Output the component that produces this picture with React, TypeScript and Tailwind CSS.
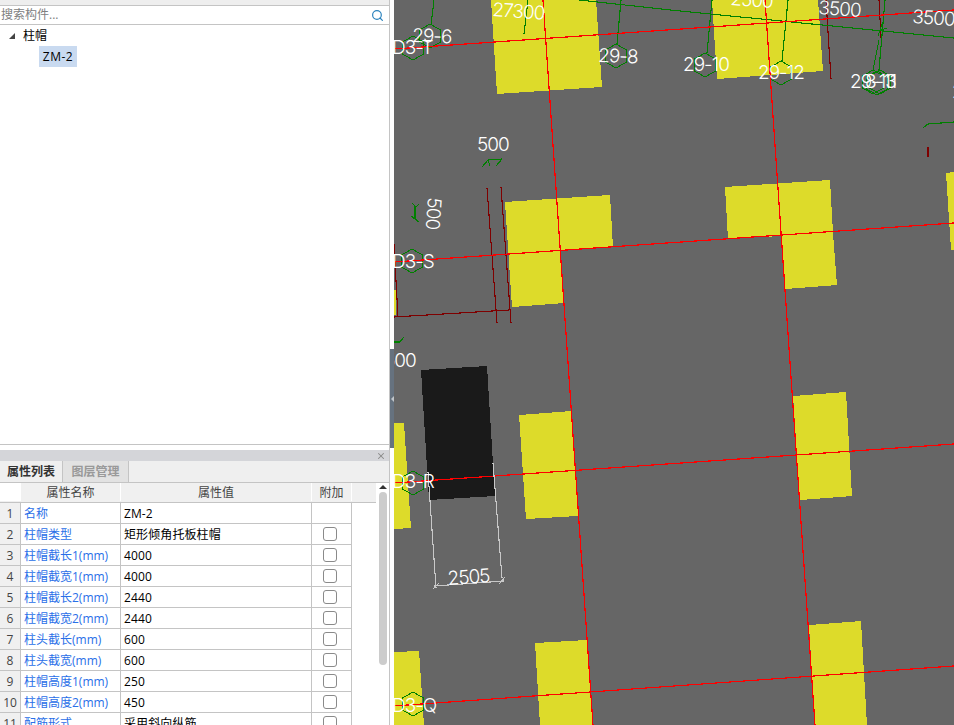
import { Search, X } from "lucide-react";

const rows = [
  ["名称", "ZM-2", false],
  ["柱帽类型", "矩形倾角托板柱帽", true],
  ["柱帽截长1(mm)", "4000", true],
  ["柱帽截宽1(mm)", "4000", true],
  ["柱帽截长2(mm)", "2440", true],
  ["柱帽截宽2(mm)", "2440", true],
  ["柱头截长(mm)", "600", true],
  ["柱头截宽(mm)", "600", true],
  ["柱帽高度1(mm)", "250", true],
  ["柱帽高度2(mm)", "450", true],
  ["配筋形式", "采用斜向纵筋", true],
] as const;

const yellowBlocks = [
  "491,0 596,0 602,87 497,94",
  "712,0 818,0 823,71 717,79",
  "505,202 610,195 613,247 561,251 564,303 512,307",
  "725,187 830,180 833,233 837,285 785,289 781,236 728,239",
  "946,173 954,172 954,250 951,250",
  "519,415 571,411 578,516 526,519",
  "793,396 846,392 852,496 800,500",
  "394,423 404,423 411,528 394,529",
  "394,652 419,651 424,725 394,725",
  "535,643 587,640 593,725 540,725",
  "809,625 861,621 867,725 815,725",
  "394,290 396,290 396,315 394,315",
];

const redLines = [
  [394, 49, 954, 10],
  [394, 262, 954, 223],
  [394, 483, 954, 444],
  [394, 706, 954, 666],
  [543, 0, 593, 725],
  [765, 0, 815, 725],
];

const darkRedLines = [
  [487, 188, 497, 323],
  [501, 187, 511, 323],
  [394, 317, 509, 310],
  [394, 244, 398, 317],
  [826, 0, 831, 79],
  [879, 0, 881, 38],
  [928, 147, 928, 157],
];

const greenLines = [
  "434,0 431,25",
  "528,0 524,34",
  "621,0 617,44",
  "712,0 707,53",
  "788,0 782,61",
  "885,0 879,70",
  "879,40 873,70",
  "579,0 680,11 954,38",
  "875,31 881,30 887,28",
  "882,24 878,36",
  "954,122 928,124 923,128",
  "482,167 488,160 502,159",
  "488,160 490,166",
  "496,166 502,159",
  "412,203 416,207 419,204",
  "415,206 415,219",
  "411,216 415,219 419,222",
  "394,342 400,342 404,337",
];

const hexagons = [
  [430, 36],
  [413, 48],
  [616, 56],
  [705, 65],
  [781, 73],
  [873, 82],
  [877, 83],
  [880, 82],
  [412, 261],
  [413, 483],
  [413, 704],
];

const labels = [
  ["27300", 492, 16, 4],
  ["29-6", 412, 42, 2],
  ["D3-T", 392, 54, 0],
  ["29-8", 598, 62, 2],
  ["29-10", 683, 71, 0],
  ["29-12", 758, 79, 0],
  ["29-13", 850, 88, 0],
  ["8-11", 865, 88, 0],
  ["2500", 730, 5, 4],
  ["3500", 818, 14, 4],
  ["3500", 912, 23, 4],
  ["2", 952, 98, 0],
  ["500", 477, 151, 0],
  ["D3-S", 392, 268, 0],
  ["500", 384, 367, 0],
  ["D3-R", 392, 488, 0],
  ["2505", 448, 585, -4],
  ["D3-Q", 392, 712, 0],
] as const;

function hexPoints(cx: number, cy: number, r = 12) {
  return [0, 60, 120, 180, 240, 300]
    .map((a) => {
      const t = ((a - 90) * Math.PI) / 180;
      return `${cx + r * Math.cos(t)},${cy + r * Math.sin(t)}`;
    })
    .join(" ");
}

function Drawing() {
  return (
    <svg viewBox="394 0 560 725" className="block h-full w-full" shapeRendering="crispEdges">
      {yellowBlocks.map((p) => (
        <polygon key={p} points={p} fill="#dddb2a" />
      ))}
      <polygon points="421,370 487,366 495,496 429,500" fill="#1a1a1a" />

      {darkRedLines.map(([a, b, c, d]) => (
        <line key={`${a}-${b}`} x1={a} y1={b} x2={c} y2={d} stroke="#7f0000" strokeWidth="1.1" />
      ))}
      {greenLines.map((p) => (
        <polyline key={p} points={p} fill="none" stroke="#008000" strokeWidth="1.1" />
      ))}
      {hexagons.map(([x, y]) => (
        <polygon key={`${x}-${y}`} points={hexPoints(x, y)} fill="none" stroke="#008000" strokeWidth="1" />
      ))}
      {redLines.map(([a, b, c, d]) => (
        <line key={`${a}-${b}`} x1={a} y1={b} x2={c} y2={d} stroke="#ff0000" strokeWidth="1.2" />
      ))}

      {/* dimension 2505 */}
      <g stroke="#c8c8c8" strokeWidth="1.1" fill="none">
        <line x1="428" y1="472" x2="436" y2="588" />
        <line x1="493" y1="463" x2="502" y2="578" />
        <line x1="434" y1="586" x2="504" y2="581" />
        <line x1="433" y1="589" x2="439" y2="583" />
        <line x1="499" y1="584" x2="505" y2="577" />
      </g>

      {labels.map(([t, x, y, r]) => (
        <text
          key={`${t}-${x}`}
          x={x}
          y={y}
          transform={r ? `rotate(${r} ${x} ${y})` : undefined}
          fill="#ffffff"
          fontSize="19"
          fontWeight="300"
          letterSpacing="-1"
          fontFamily="Inter, 'Liberation Sans', sans-serif"
        >
          {t}
        </text>
      ))}
      <text
        x="428"
        y="197"
        transform="rotate(94 428 197)"
        fill="#ffffff"
        fontSize="19"
        fontWeight="300"
        letterSpacing="-1"
        fontFamily="Inter, 'Liberation Sans', sans-serif"
      >
        500
      </text>
    </svg>
  );
}

export default function App() {
  return (
    <div
      className="flex h-[725px] w-[954px] overflow-hidden bg-white text-[12px] text-black"
      style={{ fontFamily: "'Open Sans', 'Noto Sans CJK SC', sans-serif" }}
    >
      {/* Left panel */}
      <div className="flex w-[390px] shrink-0 flex-col border-r border-[#c4c4c4]">
        <div className="h-[6px] border-b border-[#c4c4c4] bg-[#eeeeee]" />

        {/* Search */}
        <div className="flex h-[19px] items-center justify-between border-b border-[#c4c4c4] pl-px pr-[5px]">
          <span className="text-[#808080]">搜索构件...</span>
          <Search size={13} strokeWidth={2.2} className="text-[#2a82bd]" />
        </div>

        {/* Tree */}
        <div className="h-[420px] border-b border-[#c4c4c4]">
          <div className="flex h-[21px] items-center pl-[9px]">
            <span className="h-0 w-0 border-b-[6px] border-l-[6px] border-b-[#444444] border-l-transparent" />
            <span className="ml-[8px]">柱帽</span>
          </div>
          <div className="ml-[39px] flex h-[21px] w-[38px] items-center justify-center bg-[#c9daf0] tracking-[0.5px]">ZM-2</div>
        </div>

        <div className="h-[5px]" />

        {/* Properties panel */}
        <div className="flex h-[11px] items-center justify-end bg-[#d4d5d9] pr-[3px]">
          <X size={10} strokeWidth={2.5} className="text-[#8a8a8a]" />
        </div>
        <div className="flex h-[22px] border-b border-[#c4c4c4] bg-[#efefef]">
          <div className="flex w-[62px] items-center justify-center font-semibold text-[#333333]">属性列表</div>
          <div className="flex w-[67px] items-center justify-center border-x border-[#c4c4c4] bg-[#e2e2e2] font-semibold text-[#999999]">图层管理</div>
        </div>

        <div className="flex min-h-0 flex-1">
          <div className="w-[376px] overflow-hidden">
            <div className="flex h-[20px] border-b border-[#c4c4c4] bg-[#f0f0f0] pb-px text-[#444444]">
              <div className="w-[21px] bg-white" />
              <div className="flex w-[100px] items-center justify-center border-r border-white pt-px">属性名称</div>
              <div className="flex w-[191px] items-center justify-center border-r border-white pt-px">属性值</div>
              <div className="flex w-[40px] items-center justify-center border-r border-white pt-px">附加</div>
            </div>
            {rows.map(([name, value, check], i) => (
              <div key={name} className="flex h-[21px] w-[352px] shrink-0 border-b border-r border-[#c4c4c4]">
                <div className="flex w-[21px] items-center justify-center border-r border-[#c4c4c4] bg-[#f0f0f0] pt-px text-[#444444]">
                  {i + 1}
                </div>
                <div className="flex w-[100px] items-center border-r border-[#c4c4c4] pl-[3px] pt-px text-[#2a6fe8]">{name}</div>
                <div className="flex w-[191px] items-center border-r border-[#c4c4c4] pl-[3px] pt-px tracking-[0.1px]">{value}</div>
                <div className="flex flex-1 items-center pl-[11px]">
                  {check && <span className="h-[14px] w-[14px] rounded-[3px] border border-[#8a8a8a] bg-white" />}
                </div>
              </div>
            ))}
          </div>

          {/* Scrollbar */}
          <div className="flex w-[13px] flex-col items-center pt-[2px]">
            <span className="h-0 w-0 border-x-[4px] border-b-[4px] border-x-transparent border-b-[#333333]" />
            <span className="mt-[3px] h-[173px] w-[8px] rounded-[4px] bg-[#cccccc]" />
          </div>
        </div>
      </div>

      {/* Splitter */}
      <div className="flex w-[4px] shrink-0 flex-col bg-white pt-[349px]">
        <div className="flex h-[99px] flex-col items-center bg-[#66727f] pt-[47px]">
          <span className="h-0 w-0 border-y-[3px] border-r-[3px] border-y-transparent border-r-[#c0c6cc]" />
        </div>
      </div>

      {/* Canvas */}
      <div className="min-w-0 flex-1 bg-[#666666]">
        <Drawing />
      </div>
    </div>
  );
}
